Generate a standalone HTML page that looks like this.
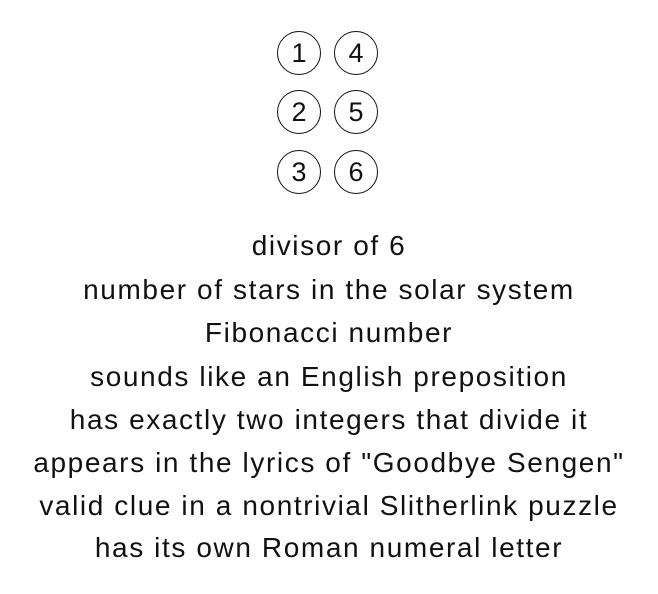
<!DOCTYPE html>
<html><head><style>
html,body{margin:0;padding:0;background:#fff;width:658px;height:594px;overflow:hidden}
.c{position:absolute;width:42px;height:42px;border:1.5px solid #111;border-radius:50%;font:27px "Liberation Sans",sans-serif;color:#111;text-align:center;line-height:42px}
.t{position:absolute;left:0;width:658px;text-align:center;font:28px "Liberation Sans",sans-serif;color:#111;letter-spacing:1.6px;line-height:30px;white-space:nowrap}
</style></head><body>
<div class="c" style="left:277px;top:31px">1</div>
<div class="c" style="left:334px;top:31px">4</div>
<div class="c" style="left:277px;top:90px">2</div>
<div class="c" style="left:334px;top:90px">5</div>
<div class="c" style="left:277px;top:150px">3</div>
<div class="c" style="left:334px;top:150px">6</div>
<div class="t" style="top:231px">divisor of 6</div>
<div class="t" style="top:275px">number of stars in the solar system</div>
<div class="t" style="top:318px">Fibonacci number</div>
<div class="t" style="top:362px">sounds like an English preposition</div>
<div class="t" style="top:405px">has exactly two integers that divide it</div>
<div class="t" style="top:448px">appears in the lyrics of "Goodbye Sengen"</div>
<div class="t" style="top:491px">valid clue in a nontrivial Slitherlink puzzle</div>
<div class="t" style="top:533px">has its own Roman numeral letter</div>
</body></html>
